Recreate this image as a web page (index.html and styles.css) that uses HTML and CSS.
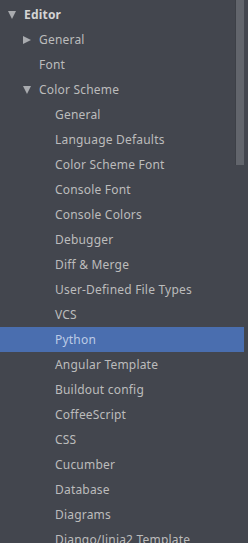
FILE: index.html
```html
<!DOCTYPE html>
<html lang="en">
<head>
  <meta charset="UTF-8">
  <title>Settings Tree</title>
  <link rel="stylesheet" href="styles.css">
</head>
<body>
  <div class="tree">
    <!-- Settings tree rows -->
    <ul class="rows">
      <li class="row level0 bold"><span class="arrow down"></span>Editor</li>
      <li class="row level1"><span class="arrow right"></span>General</li>
      <li class="row level1">Font</li>
      <li class="row level1"><span class="arrow down"></span>Color Scheme</li>
      <li class="row level2">General</li>
      <li class="row level2">Language Defaults</li>
      <li class="row level2">Color Scheme Font</li>
      <li class="row level2">Console Font</li>
      <li class="row level2">Console Colors</li>
      <li class="row level2">Debugger</li>
      <li class="row level2">Diff &amp; Merge</li>
      <li class="row level2">User-Defined File Types</li>
      <li class="row level2">VCS</li>
      <li class="row level2 selected">Python</li>
      <li class="row level2">Angular Template</li>
      <li class="row level2">Buildout config</li>
      <li class="row level2">CoffeeScript</li>
      <li class="row level2">CSS</li>
      <li class="row level2">Cucumber</li>
      <li class="row level2">Database</li>
      <li class="row level2">Diagrams</li>
      <li class="row level2 last">Django/Jinja2 Template</li>
    </ul>
    <!-- Scrollbar thumb -->
    <div class="scroll-thumb"></div>
  </div>
</body>
</html>
```

FILE: styles.css
```css
/* Dark settings tree */
body {
  margin: 0;
  background-color: #43464e;
  font-family: "Noto Sans", "Open Sans", sans-serif;
  font-size: 12px;
  letter-spacing: 0.2px;
  color: #bcbcbc;
  overflow: hidden;
}
.tree {
  position: relative;
  height: 543px;
  overflow: hidden;
}
.rows {
  list-style: none;
  margin: 0;
  padding: 2px 0 0 0;
  width: 244px;
}
.row {
  height: 25px;
  line-height: 25px;
  white-space: nowrap;
  display: flex;
  align-items: center;
}
.row.last {
  line-height: 20px;
  align-items: flex-start;
  padding-top: 3px;
}
.level0 {
  padding-left: 24px;
}
.level1 {
  padding-left: 39px;
}
.level2 {
  padding-left: 55px;
}
.bold {
  font-weight: bold;
  color: #d4d4d4;
}
.selected {
  background-color: #4a6eaf;
  color: #bccbe6;
}
.arrow {
  width: 0;
  height: 0;
  margin-left: -16px;
  margin-right: 8px;
}
.arrow.down {
  border-left: 4px solid transparent;
  border-right: 4px solid transparent;
  border-top: 8px solid #a9abaf;
}
.arrow.right {
  border-top: 4px solid transparent;
  border-bottom: 4px solid transparent;
  border-left: 8px solid #a9abaf;
}
.scroll-thumb {
  position: absolute;
  top: 0;
  left: 235px;
  width: 8px;
  height: 165px;
  background-color: #62656c;
  border-left: 1px solid #3d4047;
}
```
